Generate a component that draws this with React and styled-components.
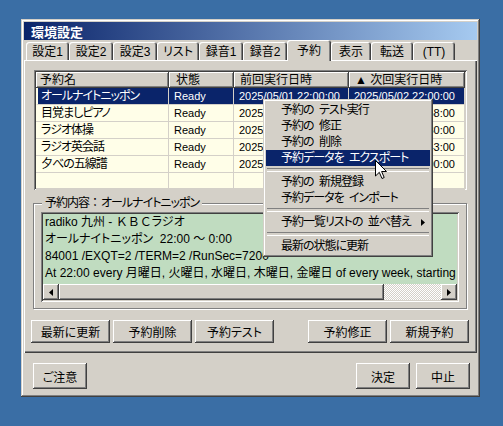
import React from "react"
import styled, { createGlobalStyle } from "styled-components"

const GlobalStyle = createGlobalStyle`
  html, body { margin: 0; padding: 0; }
  body {
    font-family: "Liberation Sans", "Noto Sans CJK JP", sans-serif;
    font-size: 12px;
    font-feature-settings: "palt" 1;
    color: #000;
    background: #3a6ea5;
  }
  * { box-sizing: border-box; }
`

const raised = `
  box-shadow: inset -1px -1px #404040, inset 1px 1px #fff, inset -2px -2px #808080, inset 2px 2px #d4d0c8;
`
const sunken = `
  box-shadow: inset 1px 1px #808080, inset -1px -1px #fff, inset 2px 2px #404040, inset -2px -2px #d4d0c8;
`
const cols = "133px 65px 115px 116px"

const Desktop = styled.div`
  position: relative;
  width: 503px;
  height: 426px;
  padding: 19px 0 0 21px;
  background: #3a6ea5;
  overflow: hidden;
`

const Window = styled.div`
  width: 459px;
  height: 378px;
  padding: 3px;
  background: #d4d0c8;
  box-shadow: inset -1px -1px #404040, inset 1px 1px #d4d0c8, inset -2px -2px #808080, inset 2px 2px #fff;
  display: flex;
  flex-direction: column;
`

const TitleBar = styled.div`
  flex: none;
  height: 18px;
  padding-left: 7px;
  display: flex;
  align-items: center;
  background: linear-gradient(to right, #0a246a, #a6caf0);
  color: #fff;
  font-weight: bold;
  font-size: 13px;
`

const TabStrip = styled.div`
  flex: none;
  height: 20px;
  padding-left: 2px;
  display: flex;
  align-items: flex-end;
  position: relative;
  z-index: 1;
`

const Tab = styled.div`
  width: ${p => p.$w}px;
  height: ${p => (p.$active ? 21 : 18)}px;
  margin-bottom: ${p => (p.$active ? -1 : 0)}px;
  padding-top: ${p => (p.$active ? 0 : 1)}px;
  display: flex;
  align-items: center;
  justify-content: center;
  background: #d4d0c8;
  border-radius: 3px 3px 0 0;
  box-shadow: inset 1px 1px #fff, inset -1px 0 #404040, inset -2px 0 #808080;
  line-height: 14px;
  white-space: nowrap;
`

const Panel = styled.div`
  flex: none;
  height: 293px;
  padding-top: 10px;
  display: flex;
  flex-direction: column;
  align-items: flex-start;
  box-shadow: inset 1px 1px #fff, inset -1px -1px #404040, inset -2px -2px #808080;
`

const List = styled.div`
  margin-left: 10px;
  width: 433px;
  height: 120px;
  padding: 2px;
  background: #fffee8;
  overflow: hidden;
  ${sunken}
`

const HeaderRow = styled.div`
  display: grid;
  grid-template-columns: ${cols};
  height: 16px;
`

const HeaderCell = styled.div`
  padding-left: ${p => p.$pad}px;
  line-height: 16px;
  background: #d4d0c8;
  white-space: nowrap;
  overflow: hidden;
  box-shadow: inset -1px -1px #404040, inset 1px 1px #fff, inset -2px -2px #808080;
`

const Row = styled.div`
  display: grid;
  grid-template-columns: ${cols};
  height: 17px;
  background: ${p => (p.$selected ? "#0a246a" : "transparent")};
  color: ${p => (p.$selected ? "#fff" : "#000")};
`

const Cell = styled.div`
  padding-left: ${p => (p.$mark ? 3 : 5)}px;
  border-left: ${p => (p.$mark ? "2px solid #fffee8" : "none")};
  border-right: 1px solid #d4d0c8;
  border-bottom: 1px solid #d4d0c8;
  line-height: 16px;
  font-size: ${p => (p.$latin ? 11 : 12)}px;
  letter-spacing: ${p => (p.$latin ? 0 : -1)}px;
  white-space: nowrap;
  overflow: hidden;
`

const GroupBox = styled.div`
  margin: 13px 0 0 9px;
  width: 434px;
  height: 106px;
  border: 1px solid #808080;
  box-shadow: inset 1px 1px #fff, 1px 1px #fff;
  display: flex;
  flex-direction: column;
  align-items: flex-start;
`

const Legend = styled.div`
  margin: -8px 0 0 8px;
  padding: 0 3px;
  height: 14px;
  line-height: 14px;
  background: #d4d0c8;
  white-space: nowrap;
  letter-spacing: -1px;
`

const Wide = styled.span`
  font-feature-settings: "palt" 0;
  letter-spacing: 0;
`

const DetailBox = styled.div`
  margin: 2px 0 0 7px;
  width: 418px;
  height: 90px;
  padding: 2px;
  background: #c0dcc0;
  display: flex;
  flex-direction: column;
  ${sunken}
`

const DetailText = styled.div`
  flex: 1;
  padding-left: 2px;
  overflow: hidden;
  white-space: nowrap;
  line-height: 17px;
`

const HScroll = styled.div`
  flex: none;
  height: 16px;
  display: flex;
`

const ScrollButton = styled.div`
  width: 16px;
  height: 16px;
  display: flex;
  align-items: center;
  justify-content: center;
  background: #d4d0c8;
  ${raised}
`

const Thumb = styled.div`
  width: ${p => p.$w}px;
  background: #d4d0c8;
  ${raised}
`

const Track = styled.div`
  flex: 1;
  background-color: #fff;
  background-image: conic-gradient(#d4d0c8 25%, #fff 0 50%, #d4d0c8 0 75%, #fff 0);
  background-size: 2px 2px;
`

const ButtonRow = styled.div`
  margin: 11px 0 0 7px;
  width: 438px;
  display: flex;
  gap: 3px;
`

const PushButton = styled.button`
  width: ${p => p.$w}px;
  height: ${p => p.$h}px;
  margin-left: ${p => (p.$push ? "auto" : "0")};
  padding: 0;
  border: none;
  background: #d4d0c8;
  font: inherit;
  font-size: 12px;
  color: #000;
  ${raised}
`

const Footer = styled.div`
  display: flex;
  gap: 6px;
  padding: 10px 7px 0 9px;
`

const Menu = styled.div`
  position: absolute;
  left: 263px;
  top: 99px;
  width: 170px;
  padding: 3px;
  background: #d4d0c8;
  box-shadow: inset -1px -1px #404040, inset 1px 1px #d4d0c8, inset -2px -2px #808080, inset 2px 2px #fff;
`

const MenuItem = styled.div`
  height: 16px;
  padding-left: 15px;
  padding-right: 5px;
  display: flex;
  align-items: center;
  line-height: 16px;
  letter-spacing: -1px;
  word-spacing: 3px;
  white-space: pre;
  background: ${p => (p.$active ? "#0a246a" : "transparent")};
  color: ${p => (p.$active ? "#fff" : "#000")};
`

const SubArrow = styled.svg`
  margin-left: auto;
  flex: none;
`

const Separator = styled.div`
  height: 8px;
  display: flex;
  align-items: center;
  padding: 0 1px;
  &::before {
    content: "";
    flex: 1;
    height: 2px;
    border-top: 1px solid #808080;
    border-bottom: 1px solid #fff;
  }
`

const Cursor = styled.svg`
  position: absolute;
  left: 375px;
  top: 160px;
`

const tabs = [
  ["設定1", 43], ["設定2", 44], ["設定3", 44], ["リスト", 42], ["録音1", 44],
  ["録音2", 44], ["予約", 44], ["表示", 40], ["転送", 42], ["(TT)", 42],
]

const rows = [
  ["オールナイトニッポン", "2025/05/01 22:00:00", "2025/05/02 22:00:00"],
  ["目覚ましピアノ", "2025/05/01 06:58:00", "2025/05/02 06:58:00"],
  ["ラジオ体操", "2025/05/01 06:30:00", "2025/05/02 06:30:00"],
  ["ラジオ英会話", "2025/05/01 07:43:00", "2025/05/02 07:43:00"],
  ["夕べの五線譜", "2025/05/01 21:00:00", "2025/05/02 21:00:00"],
]

const Arrow = ({ dir }) => (
  <svg width="4" height="7" viewBox="0 0 4 7">
    <polygon points={dir === "left" ? "4,0 4,7 0,3.5" : "0,0 0,7 4,3.5"} fill="#000" />
  </svg>
)

export default function App() {
  return (
    <>
      <GlobalStyle />
      <Desktop>
        <Window>
          <TitleBar>環境設定</TitleBar>
          <TabStrip>
            {tabs.map(([t, w]) => (
              <Tab key={t} $w={w} $active={t === "予約"}>{t}</Tab>
            ))}
          </TabStrip>
          <Panel>
            <List>
              <HeaderRow>
                <HeaderCell $pad={4}>予約名</HeaderCell>
                <HeaderCell $pad={7}>状態</HeaderCell>
                <HeaderCell $pad={6}>前回実行日時</HeaderCell>
                <HeaderCell $pad={6}>▲ 次回実行日時</HeaderCell>
              </HeaderRow>
              {rows.map(([name, last, next], i) => (
                <Row key={name} $selected={i === 0}>
                  <Cell $mark={i === 0}>{name}</Cell>
                  <Cell $latin>Ready</Cell>
                  <Cell $latin>{last}</Cell>
                  <Cell $latin>{next}</Cell>
                </Row>
              ))}
              <Row>
                <Cell /><Cell /><Cell /><Cell />
              </Row>
            </List>
            <GroupBox>
              <Legend>予約内容<Wide>：</Wide>オールナイトニッポン</Legend>
              <DetailBox>
                <DetailText>
                  <div>radiko 九州 - <Wide>ＫＢＣ</Wide>ラジオ</div>
                  <div>オールナイトニッポン&nbsp; 22:00 ～ 0:00</div>
                  <div>84001 /EXQT=2 /TERM=2 /RunSec=7200</div>
                  <div>At 22:00 every 月曜日, 火曜日, 水曜日, 木曜日, 金曜日 of every week, starting 2025/04/01</div>
                </DetailText>
                <HScroll>
                  <ScrollButton><Arrow dir="left" /></ScrollButton>
                  <Thumb $w={325} />
                  <Track />
                  <ScrollButton><Arrow dir="right" /></ScrollButton>
                </HScroll>
              </DetailBox>
            </GroupBox>
            <ButtonRow>
              <PushButton $w={79} $h={23}>最新に更新</PushButton>
              <PushButton $w={79} $h={23}>予約削除</PushButton>
              <PushButton $w={79} $h={23}>予約テスト</PushButton>
              <PushButton $w={79} $h={23} $push>予約修正</PushButton>
              <PushButton $w={79} $h={23}>新規予約</PushButton>
            </ButtonRow>
          </Panel>
          <Footer>
            <PushButton $w={54} $h={26}>ご注意</PushButton>
            <PushButton $w={54} $h={26} $push>決定</PushButton>
            <PushButton $w={54} $h={26}>中止</PushButton>
          </Footer>
        </Window>

        <Menu>
          <MenuItem>予約の テスト実行</MenuItem>
          <MenuItem>予約の 修正</MenuItem>
          <MenuItem>予約の 削除</MenuItem>
          <MenuItem $active>予約データを エクスポート</MenuItem>
          <Separator />
          <MenuItem>予約の 新規登録</MenuItem>
          <MenuItem>予約データを インポート</MenuItem>
          <Separator />
          <MenuItem>
            予約一覧リストの 並べ替え
            <SubArrow width="4" height="7" viewBox="0 0 4 7">
              <polygon points="0,0 0,7 4,3.5" fill="#000" />
            </SubArrow>
          </MenuItem>
          <Separator />
          <MenuItem>最新の状態に更新</MenuItem>
        </Menu>

        <Cursor width="13" height="20" viewBox="0 0 13 20">
          <polygon
            points="0.5,0.5 0.5,16 4.3,12.3 7,18.5 9.2,17.5 6.6,11.5 11.5,11.5"
            fill="#fff"
            stroke="#000"
            strokeWidth="1"
            strokeLinejoin="miter"
          />
        </Cursor>
      </Desktop>
    </>
  )
}
